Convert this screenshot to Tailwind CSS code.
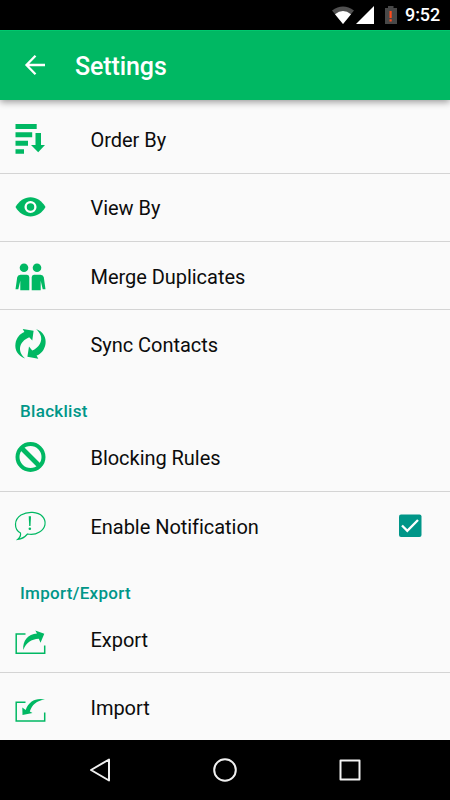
<!DOCTYPE html>
<html lang="en">
<head>
<meta charset="utf-8">
<title>Settings</title>
<script src="https://cdn.jsdelivr.net/npm/@tailwindcss/browser@4"></script>
</head>
<body class="w-[450px] h-[800px] overflow-hidden bg-[#fafafa] font-[Roboto,sans-serif] text-black flex flex-col">
<div class="h-[30px] shrink-0 bg-black flex items-center text-white">
  <svg class="ml-[330px] w-[72px] h-[30px]" viewBox="330 0 72 30">
    <path d="M332 10.5Q343 2.5 354 10.5L343 24Z" fill="#505050"/>
    <path d="M335 14.2Q343 7.800 351 14.2L343 24Z" fill="#fff"/>
    <path d="M374 6V24H356Z" fill="#fff"/>
    <path d="M385 8H388V6H393.500V8H397V24H385Z" fill="#484848"/>
    <path d="M389.500 11H391.700V18H389.500ZM389.500 19.300H391.700V21.500H389.500Z" fill="#ff4a1c"/>
  </svg>
  <span class="ml-[3px] text-[18px] leading-[30px] font-medium tracking-[-0.1px]">9:52</span>
</div>
<header class="h-[70px] shrink-0 bg-[#00b863] border-t border-[#00c76e] shadow-[0_2px_7px_rgba(0,0,0,0.4)] flex items-center text-white z-10">
  <svg class="w-[75px] h-[70px]" viewBox="0 31 75 70" fill="none" stroke="#fff" stroke-width="2.300"><path d="M45 65H27M35.500 55.800L26.500 65L35.500 74.200"/></svg>
  <h1 class="text-[25px] font-medium pt-[2px] tracking-[-0.1px]">Settings</h1>
</header>
<main class="h-[640px] shrink-0 pt-[5.6px] overflow-hidden text-[20px] tracking-[-0.04px] text-[#0c0c0c]">
  <div class="h-[68.2px] flex items-center border-b border-[#d4d4d4]">
    <svg class="w-[90.500px] h-[68px] shrink-0" viewBox="0 0 90.500 68" fill="#00b863"><path d="M15.500 19H36.700V24H15.500ZM15.500 27.300H32.200V32.300H15.500ZM15.500 35.700H28V40.700H15.500ZM15.500 44.200H24V48.800H15.500ZM35.500 28H41V40H45L38.200 47.300L31 40H35.500Z"/></svg>
    <span class="pt-[2px]">Order By</span>
  </div>
  <div class="h-[68.2px] flex items-center border-b border-[#d4d4d4]">
    <svg class="w-[90.500px] h-[68px] shrink-0" viewBox="0 0 90.500 68"><path d="M15.500 34C19 28 24.500 24.300 30.500 24.300S42 28 45.500 34C42 40 36.500 43.500 30.500 43.500S19 40 15.500 34Z" fill="#00b863"/><circle cx="30.500" cy="34" r="4.900" fill="none" stroke="#fff" stroke-width="2.300"/></svg>
    <span class="pt-[2px]">View By</span>
  </div>
  <div class="h-[68.2px] flex items-center border-b border-[#d4d4d4]">
    <svg class="w-[90.500px] h-[68px] shrink-0" viewBox="0 0.800 90.500 68" fill="#00b863"><circle cx="24" cy="26.500" r="4.300"/><circle cx="37" cy="26.500" r="4.300"/><path d="M20.500 33.500H27Q29.300 33.500 29.300 36V49H20.300V39.500L18.300 48H15.500L17.200 36Q17.700 33.500 20.500 33.500ZM40.500 33.500H34Q31.700 33.500 31.700 36V49H40.700V39.500L42.700 48H45.500L43.800 36Q43.300 33.500 40.500 33.500Z"/></svg>
    <span class="pt-[2px]">Merge Duplicates</span>
  </div>
  <div class="h-[68.2px] flex items-center">
    <svg class="w-[90.500px] h-[68px] shrink-0" viewBox="0 0 90.500 68" fill="#00b863"><path d="M25 48.400C17.500 45.800 14.500 39.500 15.500 33.500C16.500 27.500 20 23.700 24.400 22L22.700 18.900L33.600 20.700L32.300 30.500L29.200 27.200C24 29.500 20.600 33 20 38C19.700 42.500 22 45.500 25 48.400Z"/><path d="M36 19C43.500 21.600 46.500 27.900 45.500 33.900C44.500 39.900 41 43.900 36.600 45.600L38.300 48.700L27.400 46.700L29 36.500L32.200 40.600C37.500 38 40.600 34.400 41.200 29.400C41.500 25 39 21.900 36 19Z"/></svg>
    <span class="pt-[2px]">Sync Contacts</span>
  </div>
  <h2 class="h-[45px] pl-5 pt-[21px] text-[17px] leading-6 font-medium tracking-[0.3px] text-[#009688]">Blacklist</h2>
  <div class="h-[68.2px] flex items-center border-b border-[#d4d4d4]">
    <svg class="w-[90.500px] h-[68px] shrink-0" viewBox="0 0.500 90.500 68" fill="none" stroke="#00b863" stroke-width="4"><circle cx="30.500" cy="34.500" r="13"/><path d="M21.500 25.500L39.500 43.500" stroke-width="4.700"/></svg>
    <span class="pt-[2px]">Blocking Rules</span>
  </div>
  <div class="h-[68.2px] flex items-center">
    <svg class="w-[90.500px] h-[68px] shrink-0" viewBox="0 0.500 90.500 68" fill="none" stroke="#00b863" stroke-width="1.200"><path d="M20.500 41.500C13.500 37.500 14 28 21 23.500C28 19.500 38 20.200 42.500 25C47 30 45.500 37 39.500 40.500C35.500 43 31 43.300 27.500 42.500C24.500 46 21.500 47.500 17.700 48C20 46 21 44 20.500 41.500Z"/><path d="M28.700 24.700H31L30.500 34.500H29.200Z" fill="#00b863" stroke="none"/><circle cx="29.850" cy="37.200" r="1.300" fill="#00b863" stroke="none"/></svg>
    <span class="pt-[2px]">Enable Notification</span>
    <svg class="ml-auto mr-[28px] w-[24px] h-[24px]" viewBox="398 513.500 24 24"><rect x="399" y="514" width="22.500" height="22.500" rx="2" fill="#009688"/><path d="M402 525L407.300 530.300L418 519.500" fill="none" stroke="#fff" stroke-width="2.300"/></svg>
  </div>
  <h2 class="h-[45px] pl-5 pt-[21px] text-[17px] leading-6 font-medium tracking-[0.3px] text-[#009688]">Import/Export</h2>
  <div class="h-[68.6px] flex items-center border-b border-[#d4d4d4]">
    <svg class="w-[90.500px] h-[68px] shrink-0" viewBox="0 -0.400 90.500 68" fill="#00b863"><path d="M25.500 28.700H16.200V47.800H44.700V40" fill="none" stroke="#00b863" stroke-width="1.500"/><path d="M23.300 44.500C22.500 35 28 28.500 37 28L35.300 25L44.300 28.300L40.500 37.300L38.800 33.300C31 33.800 26.500 37 23.300 44.500Z"/></svg>
    <span class="pt-[3px]">Export</span>
  </div>
  <div class="h-[68.2px] flex items-center">
    <svg class="w-[90.500px] h-[68px] shrink-0" viewBox="0 0 90.500 68" fill="#00b863"><path d="M25.500 29.300H16.200V48H44.700V39.500" fill="none" stroke="#00b863" stroke-width="1.500"/><path d="M45 26.500C36 24.500 28.500 28.500 25.700 37L22.300 34.500L22.500 42L32.500 40L29.800 38.500C32 32 36.500 27.500 45 26.500Z"/></svg>
    <span class="pt-px">Import</span>
  </div>
</main>
<nav class="h-[60px] shrink-0 bg-black z-10">
  <svg class="w-[450px] h-[60px]" viewBox="0 0 450 60" fill="none" stroke="#f0f0f0" stroke-width="2" stroke-linejoin="round"><path d="M109 19.500V40.500L91 30Z"/><circle cx="225" cy="30" r="10.800"/><rect x="340.500" y="20.500" width="19" height="19"/></svg>
</nav>
</body>
</html>
